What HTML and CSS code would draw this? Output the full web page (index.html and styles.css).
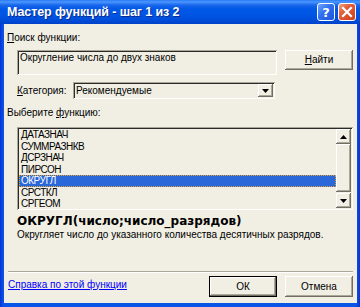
FILE: index.html
```html
<!DOCTYPE html>
<html lang="ru">
<head>
<meta charset="utf-8">
<title>Мастер функций</title>
<link rel="stylesheet" href="styles.css">
</head>
<body>
<div class="window">
  <div class="titlebar">
    <span class="title">Мастер функций - шаг 1 из 2</span>
    <div class="tb-buttons">
      <span class="tb-btn help">?</span>
      <span class="tb-btn close"><svg width="12" height="12" viewBox="0 0 12 12"><path d="M2 2 L10 10 M10 2 L2 10" stroke="#fff" stroke-width="2.2" stroke-linecap="square"/></svg></span>
    </div>
  </div>
  <div class="client">
    <div class="label l-search"><u>П</u>оиск функции:</div>
    <div class="row search-row">
      <div class="edit sunken">Округление числа до двух знаков</div>
      <div class="btn raised"><span><u>Н</u>айти</span></div>
    </div>
    <div class="row cat-row">
      <span class="label cat-label"><u>К</u>атегория:</span>
      <div class="select sunken">
        <span class="select-value">Рекомендуемые</span>
        <span class="drop raised"><svg width="7" height="4" viewBox="0 0 7 4"><path d="M0 0 H7 L3.5 4 Z" fill="#000"/></svg></span>
      </div>
    </div>
    <div class="label l-choose">Выберите <u>ф</u>ункцию:</div>
    <div class="list sunken">
      <ul class="items">
        <li>ДАТАЗНАЧ</li>
        <li>СУММРАЗНКВ</li>
        <li>ДСРЗНАЧ</li>
        <li>ПИРСОН</li>
        <li class="selected">ОКРУГЛ</li>
        <li>СРСТКЛ</li>
        <li>СРГЕОМ</li>
      </ul>
      <div class="scrollbar">
        <div class="sb-btn raised"><svg width="7" height="4" viewBox="0 0 7 4"><path d="M3.5 0 L7 4 H0 Z" fill="#000"/></svg></div>
        <div class="sb-track"><div class="sb-thumb raised"></div></div>
        <div class="sb-btn raised"><svg width="7" height="4" viewBox="0 0 7 4"><path d="M0 0 H7 L3.5 4 Z" fill="#000"/></svg></div>
      </div>
    </div>
    <div class="signature">ОКРУГЛ(число;число_разрядов)</div>
    <div class="desc">Округляет число до указанного количества десятичных разрядов.</div>
    <div class="separator"></div>
    <div class="row bottom-row">
      <a class="help-link" href="#">Справка по этой функции</a>
      <div class="btn raised default"><span>ОК</span></div>
      <div class="btn raised"><span>Отмена</span></div>
    </div>
  </div>
</div>
</body>
</html>
```

FILE: styles.css
```css
* { box-sizing: border-box; }
html, body { margin: 0; padding: 0; }
body {
  width: 360px;
  height: 307px;
  overflow: hidden;
  font-family: "Liberation Sans", Arial, sans-serif;
  font-size: 10px;
  color: #000;
  background: #0b4fdc;
}
.window {
  width: 360px;
  height: 307px;
  display: flex;
  flex-direction: column;
  background: linear-gradient(90deg, #0831d9 0, #0a48e0 2px, #0b55e6 4px, #0b55e6 356px, #0a45d8 358px, #0831d9 360px);
}
.titlebar {
  height: 24px;
  flex: none;
  display: flex;
  align-items: center;
  padding: 0 4px 0 7px;
  background: linear-gradient(180deg, #2c7bf5 0, #4a96ff 2px, #1a67ec 5px, #0058e6 9px, #0054e3 16px, #004bd6 21px, #0041c8 24px);
}
.title {
  flex: 1;
  color: #fff;
  font-weight: bold;
  font-size: 12.5px;
  letter-spacing: -0.1px;
  text-shadow: 1px 1px 0 #0a2a8c;
  white-space: nowrap;
}
.tb-buttons {
  display: flex;
  gap: 3px;
  align-self: flex-start;
  margin-top: 3px;
}
.tb-btn {
  width: 18px;
  height: 18px;
  border: 1px solid #fff;
  border-radius: 3px;
  display: flex;
  align-items: center;
  justify-content: center;
}
.help {
  background: linear-gradient(135deg, #6fa3ff 0, #2f6ff0 45%, #1d55d8 100%);
  color: #fff;
  font-family: "DejaVu Sans", sans-serif;
  font-weight: bold;
  font-size: 13px;
  line-height: 1;
}
.close {
  background: linear-gradient(135deg, #f0a080 0, #e2603c 35%, #cf3f1a 100%);
}
.client {
  flex: 1;
  margin: 0 3px 4px 4px;
  padding: 0 4px 0 0;
  background: #f1efe4;
  display: flex;
  flex-direction: column;
}
.label {
  line-height: 12px;
  white-space: nowrap;
}
.l-search {
  margin: 8px 0 0 3px;
}
.row {
  display: flex;
}
.sunken {
  padding: 2px;
  background: #f1efe4;
  box-shadow: inset 1px 1px #aca899, inset -1px -1px #fff, inset 2px 2px #2a2a2a, inset -2px -2px #f1efe4;
}
.raised {
  background: #f1efe4;
  box-shadow: inset -1px -1px #716f64, inset 1px 1px #fff, inset -2px -2px #aca899, inset 2px 2px #f1efe4;
}
.search-row {
  margin: 6px 0 0 13px;
  gap: 8px;
}
.edit {
  width: 260px;
  height: 25px;
  padding: 2px 3px;
  line-height: 11px;
}
.btn {
  width: 68px;
  height: 20px;
  flex: none;
  display: flex;
  align-items: center;
  justify-content: center;
  line-height: 12px;
}
.cat-row {
  margin: 7px 0 0 13px;
  align-items: center;
  height: 17px;
}
.cat-label {
  width: 56px;
}
.select {
  width: 202px;
  height: 17px;
  display: flex;
  align-items: center;
  justify-content: space-between;
  line-height: 12px;
}
.select-value {
  padding-left: 1px;
}
.drop {
  width: 15px;
  height: 13px;
  display: flex;
  align-items: center;
  justify-content: center;
}
.l-choose {
  margin: 8px 0 0 3px;
}
.list {
  margin: 8px 0 0 13px;
  height: 83px;
  display: flex;
}
.items {
  list-style: none;
  margin: 0;
  padding: 0;
  flex: 1;
  overflow: hidden;
}
.items li {
  height: 11.5px;
  line-height: 11.5px;
  padding-left: 2px;
  letter-spacing: -0.5px;
  white-space: nowrap;
}
.items li.selected {
  background: #2a67d8;
  color: #fff;
  outline: 1px dotted #e8a030;
  outline-offset: -1px;
}
.scrollbar {
  width: 15px;
  flex: none;
  display: flex;
  flex-direction: column;
}
.sb-btn {
  height: 15px;
  flex: none;
  display: flex;
  align-items: center;
  justify-content: center;
}
.sb-track {
  flex: 1;
  display: flex;
  flex-direction: column;
}
.sb-thumb {
  flex: 1;
  margin-bottom: 1px;
}
.signature {
  margin: 4px 0 0 13px;
  font-family: "DejaVu Sans", sans-serif;
  font-weight: bold;
  font-size: 12px;
  line-height: 14px;
  white-space: nowrap;
}
.desc {
  margin: 1px 0 0 13px;
  line-height: 12px;
  white-space: nowrap;
}
.separator {
  margin: 30px 0 0 4px;
  height: 2px;
  border-top: 1px solid #aca899;
  border-bottom: 1px solid #fff;
}
.bottom-row {
  margin: 3px 0 0 4px;
  gap: 8px;
  align-items: center;
}
.help-link {
  flex: 1;
  color: #0000ff;
  text-decoration: underline;
  line-height: 12px;
  margin-top: -4px;
}
.bottom-row .btn {
  height: 21px;
}
.btn.default {
  border: 1px solid #000;
}
```
